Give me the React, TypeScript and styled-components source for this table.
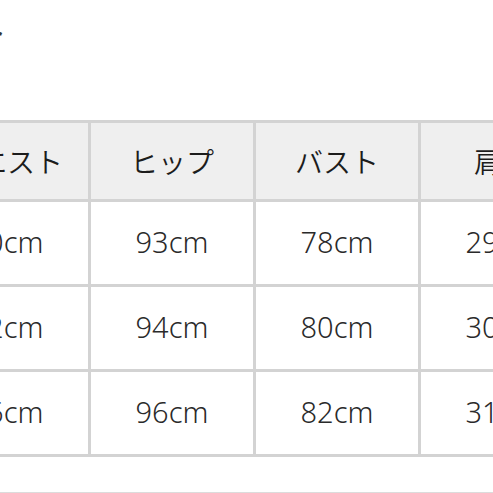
import React from "react"
import styled, { createGlobalStyle } from "styled-components"

const GlobalStyle = createGlobalStyle`
  html, body {
    margin: 0;
    padding: 0;
    background: #ffffff;
  }
  body {
    font-family: "Noto Sans", "Noto Sans CJK JP", sans-serif;
    color: #222222;
    overflow: hidden;
  }
`

const Page = styled.div`
  width: 493px;
  height: 493px;
  overflow: hidden;
  display: flex;
  flex-direction: column;
  border-bottom: 1px solid #dcdcdc;
  box-sizing: border-box;
`

const Title = styled.div`
  font-family: "Noto Sans CJK JP", sans-serif;
  font-size: 32px;
  line-height: 1;
  height: 120px;
  padding-top: 14px;
  box-sizing: border-box;
  margin-left: -25px;
  color: #333333;
`

const TableClip = styled.div`
  overflow: hidden;
  width: 100%;
`

const SizeTable = styled.table`
  border-collapse: collapse;
  table-layout: fixed;
  width: 651px;
  margin-left: -77px;
`

const HeadCell = styled.th`
  width: 162px;
  height: 76px;
  padding: 0;
  background: #efefef;
  border: 3px solid #d3d3d3;
  font-family: "Noto Sans CJK JP", sans-serif;
  font-size: 28px;
  font-weight: 350;
  color: #1c1c1c;
  text-align: center;
  vertical-align: middle;
`

const BodyCell = styled.td`
  height: 78px;
  padding: 0 0 4px;
  background: #ffffff;
  border: 3px solid #d3d3d3;
  font-family: "Noto Sans", "Noto Sans CJK JP", sans-serif;
  font-size: 29px;
  font-weight: 300;
  color: #2a2a2a;
  text-align: center;
  vertical-align: middle;
`

const headers = ["ウエスト", "ヒップ", "バスト", "肩幅"]

const rows = [
  ["60cm", "93cm", "78cm", "29cm"],
  ["62cm", "94cm", "80cm", "30cm"],
  ["66cm", "96cm", "82cm", "31cm"],
]

export default function App() {
  return (
    <>
      <GlobalStyle />
      <Page>
        <Title>ト</Title>
        <TableClip>
          <SizeTable>
            <thead>
              <tr>
                {headers.map((h) => (
                  <HeadCell key={h}>{h}</HeadCell>
                ))}
              </tr>
            </thead>
            <tbody>
              {rows.map((r, i) => (
                <tr key={i}>
                  {r.map((v, j) => (
                    <BodyCell key={j}>{v}</BodyCell>
                  ))}
                </tr>
              ))}
            </tbody>
          </SizeTable>
        </TableClip>
      </Page>
    </>
  )
}
